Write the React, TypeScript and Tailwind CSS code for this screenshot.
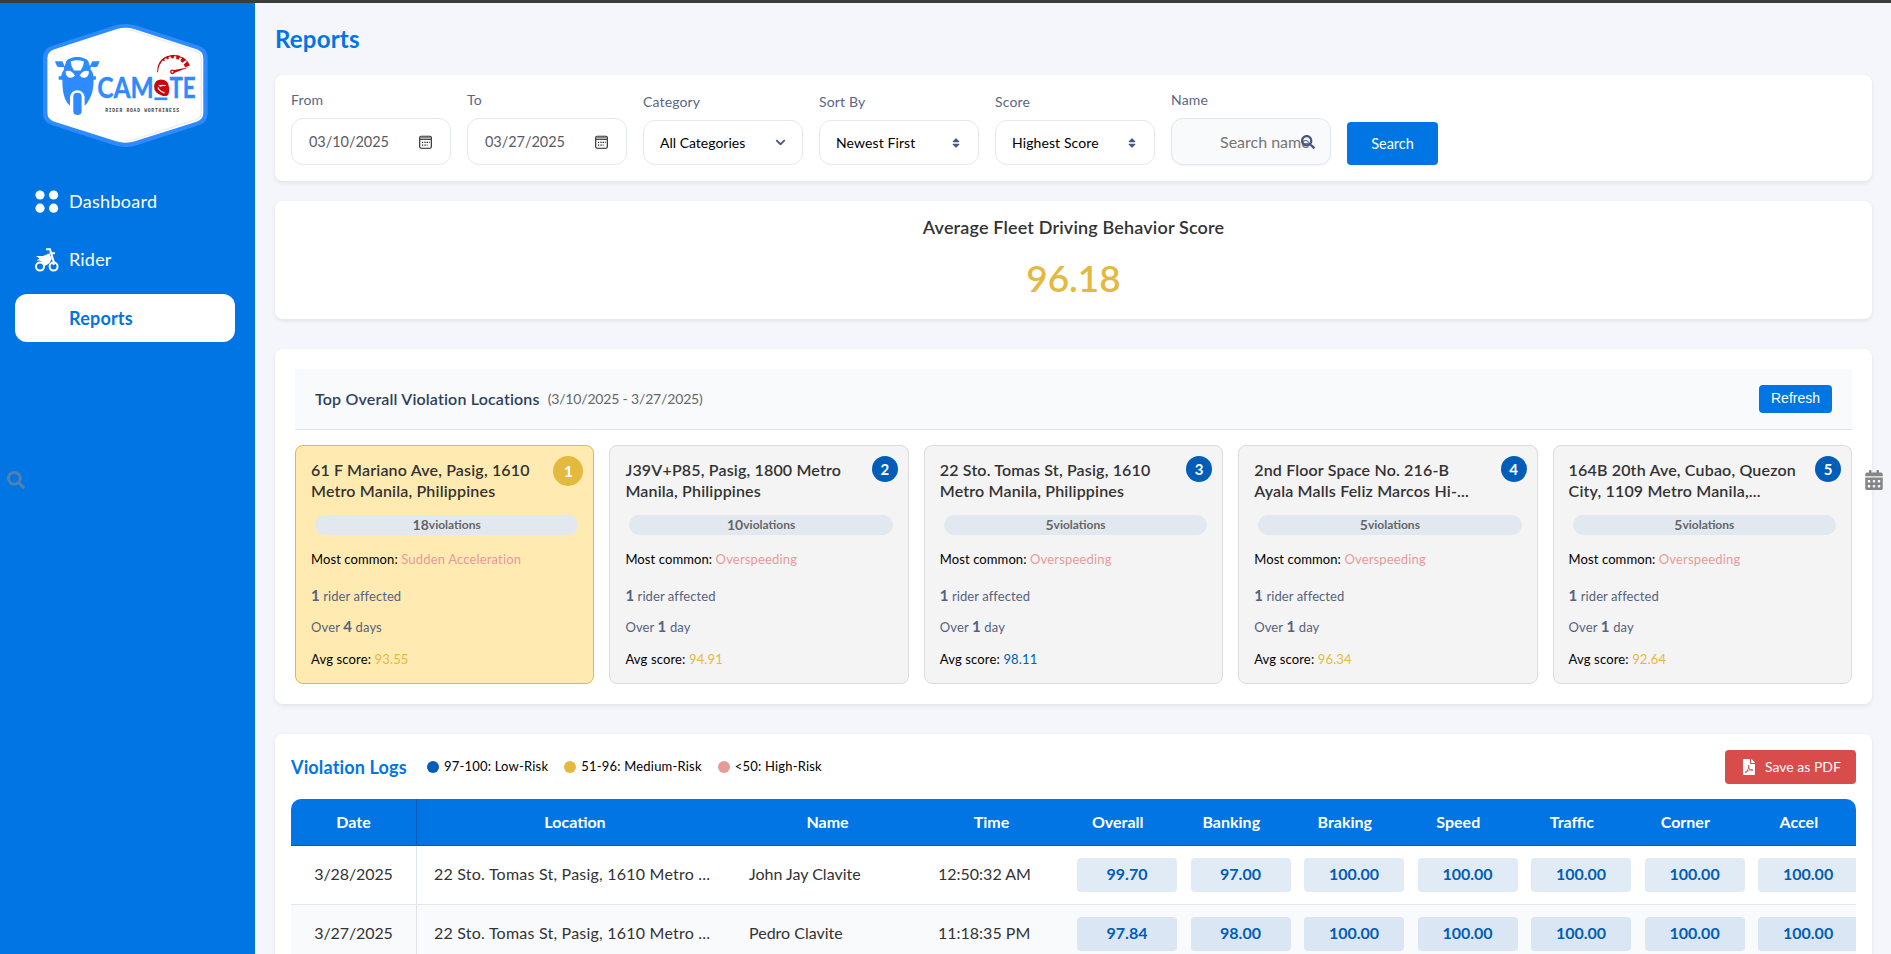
import type { ReactNode } from "react";
import { FaCalendarAlt, FaChevronDown, FaFilePdf, FaSearch, FaSort } from "react-icons/fa";

const GAUGE = [
  { a: 199, w: 6 },
  { a: 214, w: 9 },
  { a: 229, w: 13 },
  { a: 245, w: 17 },
  { a: 264, w: 21 },
  { a: 285, w: 24 },
  { a: 307, w: 27 },
  { a: 330, w: 30 },
];

function Logo() {
  return (
    <svg viewBox="20 24 500 376" className="h-[125px] w-[167px]" aria-label="Camote logo">
      <path
        d="M236 32Q270 22 304 32L492 93Q517 102 517 128V296Q517 322 492 331L304 392Q270 402 236 392L48 331Q22 322 22 296V128Q22 102 48 93Z"
        fill="#2e8bff"
      />
      <path
        d="M242 43Q270 34 298 43L486 104Q504 111 504 130V294Q504 313 486 320L298 380Q270 389 242 380L54 320Q35 313 35 294V130Q35 111 54 104Z"
        fill="#fff"
      />
      <path
        d="M271 44Q286 44 300 49L482 109Q498 115 498 133V291Q498 309 482 315L300 373Q286 377 271 377"
        fill="none"
        stroke="#ececec"
        strokeWidth="4"
      />
      <g fill="#2e8bff">
        <path d="M58 139H80L88 156H66Q60 148 58 139ZM192 139H170L162 156H184Q190 148 192 139Z" />
        <path d="M84 160L96 134Q110 126 125 126Q140 126 154 134L166 160L160 166L146 142L104 142L90 166Z" />
        <path d="M92 138Q125 114 158 138L164 162Q174 172 174 184H181V195H174Q174 232 162 252Q156 266 147 273V246Q143 226 125 226Q107 226 103 246V273Q94 266 88 252Q80 232 80 195H69V184H76Q78 172 86 162Z" />
        <rect x="113" y="234" width="25" height="67" rx="12" />
      </g>
      <g fill="#fff">
        <path d="M105 140Q125 132 145 140Q144 156 135 167H115Q106 156 105 140Z" />
        <path d="M90 169Q108 164 118 182Q110 191 100 188Q90 184 90 169ZM160 169Q142 164 132 182Q140 191 150 188Q160 184 160 169Z" />
      </g>
      <g fill="#2e8bff" stroke="#2e8bff" strokeWidth="1" fontFamily="Lato, sans-serif" fontWeight="700" fontSize="83">
        <text x="185" y="249" textLength="170" lengthAdjust="spacingAndGlyphs">CAM</text>
        <text x="402" y="249" textLength="79" lengthAdjust="spacingAndGlyphs">TE</text>
      </g>
      <path d="M357 248H396V256H357Z" fill="#2e8bff" />
      <path
        d="M356 216Q357 194 378 194Q400 195 401 219Q403 236 396 242Q388 246 377 241Q356 234 356 216Z"
        fill="#c9080d"
      />
      <path d="M368 213Q378 207 393 211L388 214Q380 213 376 216Z" fill="#fff" />
      <path d="M369 217Q374 228 389 233L386 236Q370 230 366 219Z" fill="#fff" />
      {GAUGE.map(({ a, w }) => (
        <path
          key={a}
          d={`M${51 - w / 2} ${-w / 6}L51 ${-w / 4}L51 ${w / 4}L${51 - w / 2} ${w / 6}Z`}
          transform={`translate(416 171) rotate(${a})`}
          fill="#c9080d"
        />
      ))}
      <path d="M365 172Q366 121 418 120Q446 122 465 151Q444 126 418 124Q371 125 368 172Z" fill="#c9080d" />
      <path d="M412 166L461 157L414 175Z" fill="#c9080d" />
      <circle cx="411" cy="171" r="5" fill="#fff" stroke="#c9080d" strokeWidth="4" />
      <text
        x="209"
        y="291"
        fontFamily="'Liberation Mono', monospace"
        fontWeight="700"
        fontSize="14"
        fill="#444"
        textLength="222"
        lengthAdjust="spacing"
      >
        RIDER ROAD WORTHINESS
      </text>
    </svg>
  );
}

function DashboardIcon() {
  return (
    <svg viewBox="0 0 24 24" className="size-6" fill="#fff">
      <circle cx="5" cy="5" r="4.6" />
      <circle cx="18.6" cy="5" r="4.6" />
      <circle cx="5" cy="18.2" r="4.6" />
      <circle cx="18.6" cy="18.2" r="4.6" />
    </svg>
  );
}

function BikeIcon() {
  return (
    <svg viewBox="0 0 24 24" className="size-6">
      <g fill="none" stroke="#fff" strokeWidth="2">
        <circle cx="5" cy="18.6" r="4" />
        <circle cx="18.6" cy="18.6" r="4" />
        <path d="M11 1.3H15L18.6 13.5V17M14.6 5.2H20" />
      </g>
      <path d="M1 8H8L14 5.5L17 10.5L14.5 15L11 17.5H8.5Q8 13.6 4.5 12.6H1.5L4.5 10.6Z" fill="#fff" />
    </svg>
  );
}

function DateIcon() {
  return (
    <svg viewBox="0 0 13 14" className="mr-px h-[14px] w-[13px] shrink-0">
      <rect x="0.7" y="1.2" width="11.6" height="12" rx="1.4" fill="none" stroke="#222" strokeWidth="1.1" />
      <path d="M1 2.6H12" stroke="#888" strokeWidth="1.8" />
      <path d="M1 4.4H12" stroke="#222" strokeWidth="0.9" />
      <path d="M5.4 7.4H6.7M7.7 7.4H9M9.9 7.4H10.7M3 7.4H4.1M3 10.2H4.2M5.4 10.2H6.7M7.7 10.2H8.5" stroke="#222" strokeWidth="1.2" />
    </svg>
  );
}

function Field({ label, children, tall = false }: { label: string; children: ReactNode; tall?: boolean }) {
  return (
    <label className="flex w-40 flex-col">
      <span className="mb-2 flex h-[21px] items-center text-[14px] leading-[21px] tracking-[0.15px] text-[#5a6684]">{label}</span>
      <span
        className={
          tall
            ? "flex h-[47px] items-center justify-between rounded-xl border border-[#e4e8f1] bg-white px-[17px]"
            : "flex h-[45px] items-center justify-between rounded-xl border border-[#e4e8f1] bg-white px-4"
        }
      >
        {children}
      </span>
    </label>
  );
}

const LOCATIONS = [
  { rank: 1, lines: ["61 F Mariano Ave, Pasig, 1610", "Metro Manila, Philippines"], count: 18, common: "Sudden Acceleration", days: 4, score: "93.55" },
  { rank: 2, lines: ["J39V+P85, Pasig, 1800 Metro", "Manila, Philippines"], count: 10, common: "Overspeeding", days: 1, score: "94.91" },
  { rank: 3, lines: ["22 Sto. Tomas St, Pasig, 1610", "Metro Manila, Philippines"], count: 5, common: "Overspeeding", days: 1, score: "98.11" },
  { rank: 4, lines: ["2nd Floor Space No. 216-B", "Ayala Malls Feliz Marcos Hi-..."], count: 5, common: "Overspeeding", days: 1, score: "96.34" },
  { rank: 5, lines: ["164B 20th Ave, Cubao, Quezon", "City, 1109 Metro Manila,..."], count: 5, common: "Overspeeding", days: 1, score: "92.64" },
];

function LocationCard({ item }: { item: (typeof LOCATIONS)[number] }) {
  const first = item.rank === 1;
  return (
    <article
      className={
        first
          ? "relative h-[239px] rounded-lg border border-[#e4b93f] bg-[#ffebb2] px-[15px] pt-[13px]"
          : "relative h-[239px] rounded-lg border border-[#dcdcdc] bg-[#f4f4f4] px-[15px] pt-[13px]"
      }
    >
      <span
        className={
          first
            ? "absolute top-[10px] right-[10px] flex size-[30px] items-center justify-center rounded-full bg-[#e4b93f] text-base font-bold text-white"
            : "absolute top-[10px] right-[10px] flex size-[26px] items-center justify-center rounded-full bg-[#005eb8] text-[15px] font-bold text-white"
        }
      >
        {item.rank}
      </span>
      <h3 className="text-base leading-[21.4px] font-semibold tracking-[0.17px] whitespace-nowrap text-[#333]">
        {item.lines[0]}
        <br />
        {item.lines[1]}
      </h3>
      <div className="mt-[13px] ml-1 flex h-5 items-center justify-center rounded-[10px] bg-[#e1e8f0] text-[12px] font-bold text-[#666]">
        <span className="text-[14px]">{item.count}</span>violations
      </div>
      <p className="mt-[14px] text-[13px] leading-5 tracking-[0.1px] text-black">
        Most common: <span className="tracking-[0.17px] text-[#e89a9a]">{item.common}</span>
      </p>
      <p className="mt-[16px] text-[13px] leading-5 tracking-[0.08px] text-[#56627f]">
        <b className="text-[15px]">1</b> rider affected
      </p>
      <p className="mt-[10px] text-[13px] leading-5 tracking-[0.13px] text-[#56627f]">
        Over <b className="text-[15px]">{item.days}</b> {item.days > 1 ? "days" : "day"}
      </p>
      <p className="mt-[12px] text-[13px] leading-5 tracking-[0.15px] text-black">
        Avg score:{" "}
        <span className={Number(item.score) >= 97 ? "text-[#005eb8]" : "text-[#e4b93f]"}>{item.score}</span>
      </p>
    </article>
  );
}

const LEGEND = [
  { dot: "size-3 rounded-full bg-[#005eb8]", text: "97-100: Low-Risk" },
  { dot: "size-3 rounded-full bg-[#e4b93f]", text: "51-96: Medium-Risk" },
  { dot: "size-3 rounded-full bg-[#e89a9a]", text: "<50: High-Risk" },
];

const COLUMNS = ["Date", "Location", "Name", "Time", "Overall", "Banking", "Braking", "Speed", "Traffic", "Corner", "Accel"];

const ROWS = [
  { date: "3/28/2025", location: "22 Sto. Tomas St, Pasig, 1610 Metro ...", name: "John Jay Clavite", time: "12:50:32 AM", scores: ["99.70", "97.00", "100.00", "100.00", "100.00", "100.00", "100.00"] },
  { date: "3/27/2025", location: "22 Sto. Tomas St, Pasig, 1610 Metro ...", name: "Pedro Clavite", time: "11:18:35 PM", scores: ["97.84", "98.00", "100.00", "100.00", "100.00", "100.00", "100.00"] },
];

const GRID = "grid grid-cols-[126px_316px_189px_139px_repeat(7,113.52px)]";
const CARD = "rounded-lg bg-white shadow-[0_2px_5px_rgba(0,0,0,0.08)]";

export default function App() {
  return (
    <div className="flex h-[954px] w-full flex-col overflow-hidden bg-[#f5f6fb] font-['Lato',sans-serif]">
      <div className="h-[3px] shrink-0 bg-[#3c3c3c]" />
      <div className="flex min-h-0 flex-1">
        <aside className="relative flex w-[255px] shrink-0 flex-col bg-[#0075e3]">
          <div className="flex pt-5 pl-[42px]">
            <Logo />
          </div>
          <nav className="mt-[30px] flex flex-col gap-[10px] pr-5 pl-[15px] text-[18px] text-white">
            <a className="flex h-12 items-center gap-[10px] pb-px pl-5">
              <DashboardIcon />
              <span className="tracking-[0.3px]">Dashboard</span>
            </a>
            <a className="flex h-12 items-center gap-[10px] pb-px pl-5">
              <BikeIcon />
              <span className="tracking-[0.2px]">Rider</span>
            </a>
            <a className="flex h-12 items-center rounded-xl bg-white pl-[54px] font-bold tracking-[0.2px] text-[#0075e3]">Reports</a>
          </nav>
          <FaSearch className="absolute top-[468px] left-[7px] size-[18px] text-[#8a8a8a] opacity-60" />
        </aside>

        <main className="flex flex-1 flex-col pr-[19px] pl-5">
          <h1 className="mt-[18px] h-9 text-2xl leading-9 font-bold tracking-[0.2px] text-[#0075e3]">Reports</h1>

          <section className={`${CARD} mt-[18px] flex h-[106px] shrink-0 items-end gap-4 px-4 pb-4`}>
            <Field label="From" tall>
              <span className="text-[14.5px] tracking-[-0.05px] text-[#5b5b66]">03/10/2025</span>
              <DateIcon />
            </Field>
            <Field label="To" tall>
              <span className="text-[14.5px] tracking-[-0.05px] text-[#5b5b66]">03/27/2025</span>
              <DateIcon />
            </Field>
            <Field label="Category">
              <span className="text-[14px]">All Categories</span>
              <FaChevronDown className="size-[11px] text-[#4a5680]" />
            </Field>
            <Field label="Sort By">
              <span className="text-[14px] tracking-[0.1px]">Newest First</span>
              <FaSort className="size-3 text-[#4a5680]" />
            </Field>
            <Field label="Score">
              <span className="text-[14px] tracking-[0.1px]">Highest Score</span>
              <FaSort className="size-3 text-[#4a5680]" />
            </Field>
            <label className="flex w-40 flex-col">
              <span className="mb-2 flex h-[21px] items-center text-[14px] tracking-[0.15px] text-[#5a6684]">Name</span>
              <span className="relative flex h-[47px] items-center rounded-xl border border-[#e1e6f0] bg-[#f9fafc] pl-12 shadow-[0_1px_2px_rgba(0,0,0,0.05)]">
                <span className="text-base whitespace-nowrap text-[#757575]">Search name</span>
                <FaSearch className="absolute top-4 right-[15px] size-[14px] text-[#4a5680]" />
              </span>
            </label>
            <button className="h-[43px] w-[91px] rounded bg-[#0075e3] text-[14.5px] text-white">Search</button>
          </section>

          <section className={`${CARD} mt-5 flex h-[118px] shrink-0 flex-col items-center`}>
            <h2 className="mt-[12px] text-[18px] leading-7 font-semibold tracking-[0.16px] text-[#333]">
              Average Fleet Driving Behavior Score
            </h2>
            <p className="mt-[13px] text-[37px] leading-[48px] font-semibold text-[#e4b93f]">96.18</p>
          </section>

          <section className={`${CARD} mt-[30px] h-[355px] shrink-0 p-5`}>
            <header className="flex h-[61px] items-center border-b border-[#e1e5ed] bg-[#f9fafc] px-5 pb-px">
              <h2 className="text-base font-semibold tracking-[0.17px] text-[#2f3f5c]">Top Overall Violation Locations</h2>
              <span className="ml-2 text-[14px] tracking-[-0.17px] text-[#666]">(3/10/2025 - 3/27/2025)</span>
              <button className="ml-auto h-7 w-[73px] rounded bg-[#0075e3] font-['Liberation_Sans',Arial,sans-serif] text-[14px] text-white">
                Refresh
              </button>
            </header>
            <div className="mt-[15px] grid grid-cols-5 gap-[15px]">
              {LOCATIONS.map((item) => (
                <LocationCard key={item.rank} item={item} />
              ))}
            </div>
          </section>

          <section className={`${CARD} mt-[30px] h-[400px] shrink-0 px-4 pt-4`}>
            <header className="flex h-[34px] items-center">
              <h2 className="w-[136px] text-[18px] font-bold tracking-[0.15px] whitespace-nowrap text-[#0075e3]">Violation Logs</h2>
              <div className="flex gap-[16px]">
                {LEGEND.map((entry) => (
                  <span key={entry.text} className="flex items-center gap-[5px] text-[13px] tracking-[0.2px] text-black">
                    <i className={entry.dot} />
                    {entry.text}
                  </span>
                ))}
              </div>
              <button className="ml-auto flex h-[34px] w-[131px] items-center gap-2.5 rounded bg-[#d94c4c] pl-[18px] text-[14px] whitespace-nowrap text-white">
                <FaFilePdf className="h-4 w-3" />
                <span className="pb-px">Save as PDF</span>
              </button>
            </header>

            <div className="mt-[15px] overflow-hidden rounded-t-[10px]">
              <div className={`${GRID} h-[47px] border-b border-[#005eb8] bg-[#0075e3] text-base font-bold text-white`}>
                {COLUMNS.map((name, i) => (
                  <div
                    key={name}
                    className={
                      i === 0
                        ? "flex items-center justify-center border-r border-[#005eb8] pb-px"
                        : "flex items-center justify-center pb-px"
                    }
                  >
                    {name}
                  </div>
                ))}
              </div>
              {ROWS.map((row) => (
                <div
                  key={row.date}
                  className={`${GRID} h-[59px] border-b border-[#e1e6ef] text-base whitespace-nowrap text-[#333] even:bg-white odd:bg-[#f9fafc]`}
                >
                  <div className="flex items-center justify-center border-r border-[#dfe3ee] pb-0.5 tracking-[-0.1px]">{row.date}</div>
                  <div className="flex items-center pb-0.5 pl-[17px] tracking-[0.22px]">{row.location}</div>
                  <div className="flex items-center pb-0.5 pl-4">{row.name}</div>
                  <div className="flex items-center pb-0.5 pl-4">{row.time}</div>
                  {row.scores.map((score, i) => (
                    <div key={i} className="flex items-center pl-4">
                      <span className="flex h-[34px] w-[100px] shrink-0 items-center justify-center rounded bg-[#005eb8]/12 pb-0.5 font-bold text-[#005eb8]">
                        {score}
                      </span>
                    </div>
                  ))}
                </div>
              ))}
            </div>
          </section>
        </main>
      </div>
      <FaCalendarAlt className="absolute top-[470px] left-[1865px] h-5 w-[18px] text-[#868686]" />
    </div>
  );
}
